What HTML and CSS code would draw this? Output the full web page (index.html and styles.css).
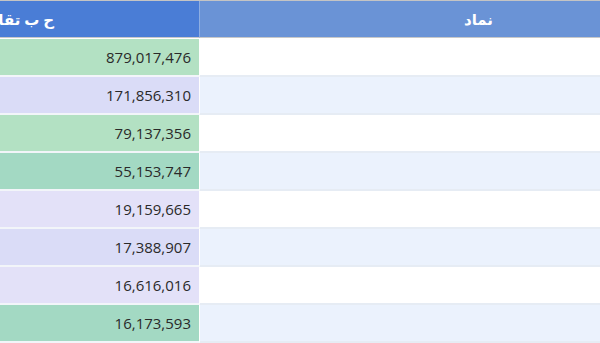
FILE: index.html
```html
<!DOCTYPE html>
<html lang="fa">
<head>
  <meta charset="UTF-8">
  <meta name="viewport" content="width=device-width, initial-scale=1">
  <title>جدول نمادها</title>
  <link rel="stylesheet" href="styles.css">
</head>
<body>
  <table class="grid">
    <colgroup>
      <col class="col-value">
      <col class="col-symbol">
    </colgroup>
    <thead>
      <tr>
        <th class="head-value">ح ب تقاضا</th>
        <th class="head-symbol">نماد</th>
      </tr>
    </thead>
    <tbody>
      <tr><td class="value green">879,017,476</td><td class="symbol"></td></tr>
      <tr><td class="value violet">171,856,310</td><td class="symbol alt"></td></tr>
      <tr><td class="value green">79,137,356</td><td class="symbol"></td></tr>
      <tr><td class="value teal">55,153,747</td><td class="symbol alt"></td></tr>
      <tr><td class="value lilac">19,159,665</td><td class="symbol"></td></tr>
      <tr><td class="value violet">17,388,907</td><td class="symbol alt"></td></tr>
      <tr><td class="value lilac">16,616,016</td><td class="symbol"></td></tr>
      <tr><td class="value teal">16,173,593</td><td class="symbol alt"></td></tr>
    </tbody>
  </table>
</body>
</html>
```

FILE: styles.css
```css
body {
  margin: 0;
  font-family: 'Open Sans', 'DejaVu Sans', sans-serif;
  background-color: #fff;
  color: #2a2a2a;
  overflow: hidden;
}
.grid {
  width: 600px;
  table-layout: fixed;
  border-collapse: separate;
  border-spacing: 0;
  border-top: 1px solid #c4c4c4;
}
.col-value {
  width: 200px;
}
th {
  height: 36px;
  padding: 0;
  color: #fff;
  font-size: 15px;
  font-weight: bold;
  white-space: nowrap;
  overflow: hidden;
  direction: rtl;
  text-align: right;
  border-bottom: 1px solid #c8c8c8;
}
.head-value {
  background-color: #4a7dd6;
  padding-right: 146px;
  border-right: 1px solid #8eaee2;
}
.head-symbol {
  background-color: #6a93d6;
  padding-right: 107px;
}
td {
  height: 36px;
  padding: 0;
  font-size: 15px;
  font-weight: 500;
  border-bottom: 2px solid #e6ecf4;
}
tbody tr:first-child td {
  border-top: 1px solid #fff;
}
.value {
  text-align: right;
  padding-right: 8px;
  border-right: 1px solid #fff;
  border-bottom-color: #f2f5f9;
}
.green { background-color: #b3e1c3; }
.teal { background-color: #a3d9c3; }
.violet { background-color: #dadcf7; }
.lilac { background-color: #e3e1f8; }
.symbol { background-color: #fff; }
.symbol.alt { background-color: #ebf2fd; }
```
